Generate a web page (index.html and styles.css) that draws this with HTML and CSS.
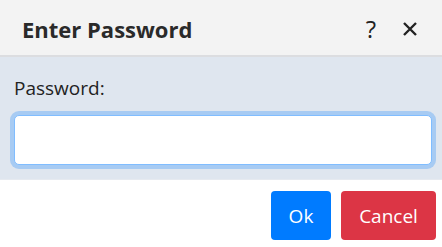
FILE: index.html
```
<!DOCTYPE html>
<html>
<head>
<meta charset="utf-8">
<link rel="stylesheet" href="styles.css">
</head>
<body>
<div class="dialog">
  <div class="header">
    <div class="title">Enter Password</div>
    <div class="tools">
      <span class="help">?</span>
      <svg class="close" width="16" height="16" viewBox="0 0 16 16"><path d="M2 2L14 14M14 2L2 14" stroke="#222" stroke-width="2.4" stroke-linecap="butt"/></svg>
    </div>
  </div>
  <div class="body">
    <label class="label">Password:</label>
    <div class="input"></div>
  </div>
  <div class="footer">
    <button class="btn ok">Ok</button>
    <button class="btn cancel">Cancel</button>
  </div>
</div>
</body>
</html>
```
FILE: styles.css
```
html, body { margin: 0; padding: 0; }
body { width: 442px; height: 247px; overflow: hidden; font-family: "Open Sans", "Noto Sans", sans-serif; background: #fff; }
.dialog { display: flex; flex-direction: column; height: 247px; }
.header { height: 57px; background: #f3f3f3; border-bottom: 2px solid #dcdde0; display: flex; align-items: center; justify-content: space-between; padding: 2px 24px 0 22px; box-sizing: border-box; }
.title { font-weight: 700; font-size: 22px; color: #2a2a2a; letter-spacing: 0; }
.tools { display: flex; align-items: center; gap: 26px; }
.help { font-size: 24px; color: #222; line-height: 1; }
.close { display: block; }
.body { background: #dfe6ef; padding: 19px 10px 14px 14px; display: flex; flex-direction: column; border-bottom: 1px solid #e6eaf0; }
.label { font-size: 19px; color: #222; line-height: 24px; margin-bottom: 15px; }
.input { height: 48px; background: #fff; border: 1px solid #80bdff; border-radius: 5px; box-shadow: 0 0 0 4px rgba(0,123,255,.25); }
.footer { display: flex; justify-content: flex-end; gap: 10px; padding: 11px 6px 0 0; }
.btn { font-family: "Open Sans", "Noto Sans", sans-serif; font-size: 19px; color: #fff; border: none; border-radius: 4px; height: 49px; padding: 0; }
.ok { background: #007bff; width: 60px; }
.cancel { background: #dc3545; width: 95px; }
```
